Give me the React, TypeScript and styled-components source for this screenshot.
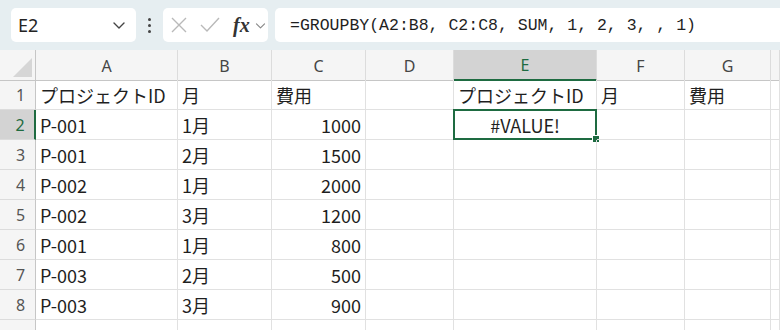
import styled, { createGlobalStyle } from 'styled-components';

const GlobalStyle = createGlobalStyle`
  html, body {
    margin: 0;
    padding: 0;
    background: #ffffff;
    overflow: hidden;
  }
  body {
    font-family: 'Noto Sans CJK JP', 'Noto Sans', sans-serif;
  }
`;

const Page = styled.div`
  width: 780px;
  height: 330px;
  overflow: hidden;
  background: #ffffff;
`;

const Toolbar = styled.div`
  height: 50px;
  box-sizing: border-box;
  background: #e6eef1;
  display: flex;
  align-items: center;
  padding: 0 0 0 11px;
`;

const NameBox = styled.div`
  width: 125px;
  height: 34px;
  box-sizing: border-box;
  background: #ffffff;
  border-radius: 5px;
  display: flex;
  align-items: center;
  justify-content: space-between;
  padding: 0 9px 0 7px;
  font-family: 'Noto Sans', sans-serif;
  font-size: 18px;
  color: #242424;
`;

const Dots = styled.div`
  width: 27px;
  display: flex;
  flex-direction: column;
  align-items: center;
  gap: 3px;
  span {
    width: 3px;
    height: 3px;
    border-radius: 50%;
    background: #444;
  }
`;

const FxBox = styled.div`
  width: 105px;
  height: 34px;
  box-sizing: border-box;
  background: #ffffff;
  border-radius: 5px;
  display: flex;
  align-items: center;
  padding: 0 0 0 6px;
  gap: 10px;
`;

const FxLabel = styled.span`
  font-family: 'Liberation Serif', serif;
  font-style: italic;
  font-weight: bold;
  font-size: 20px;
  color: #333;
  margin-left: 2px;
  margin-right: -6px;
`;

const FormulaInput = styled.div`
  flex: 1;
  height: 34px;
  margin-left: 7px;
  box-sizing: border-box;
  background: #ffffff;
  border-radius: 5px 0 0 5px;
  display: flex;
  align-items: center;
  padding-left: 15px;
  font-family: 'Liberation Mono', monospace;
  font-size: 16.5px;
  color: #1f1f1f;
  white-space: nowrap;
`;

const Sheet = styled.div`
  display: grid;
  grid-template-columns: 36px 142px 94px 94px 88px 143px 88px 86px 1fr;
  grid-auto-rows: 30px;
`;

const ColHeader = styled.div<{ active?: boolean }>`
  box-sizing: border-box;
  height: 31px;
  background: ${(p) => (p.active ? '#d3d3d3' : '#f5f5f5')};
  border-right: 1px solid #dcdcdc;
  border-bottom: ${(p) => (p.active ? '2px solid #1e6b41' : '1px solid #c6c6c6')};
  color: ${(p) => (p.active ? '#1e6b41' : '#454545')};
  display: flex;
  align-items: center;
  justify-content: center;
  font-family: 'Noto Sans', sans-serif;
  font-size: 16px;
  padding-top: 1px;
`;

const Corner = styled.div`
  box-sizing: border-box;
  height: 31px;
  background: #f5f5f5;
  border-right: 1px solid #c6c6c6;
  border-bottom: 1px solid #c6c6c6;
  position: relative;
  &::after {
    content: '';
    position: absolute;
    right: 3px;
    bottom: 3px;
    border-style: solid;
    border-width: 0 0 19px 19px;
    border-color: transparent transparent #d6d6d6 transparent;
  }
`;

const RowHeader = styled.div<{ active?: boolean }>`
  box-sizing: border-box;
  background: ${(p) => (p.active ? '#d3d3d3' : '#f5f5f5')};
  border-right: ${(p) => (p.active ? '2px solid #1e6b41' : '1px solid #c6c6c6')};
  border-bottom: 1px solid #dcdcdc;
  color: ${(p) => (p.active ? '#1e6b41' : '#555555')};
  display: flex;
  align-items: center;
  justify-content: center;
  font-family: 'Noto Sans', sans-serif;
  font-size: 16px;
  padding-left: 6px;
`;

const Cell = styled.div<{ align?: 'left' | 'right' | 'center' }>`
  box-sizing: border-box;
  position: relative;
  border-right: 1px solid #e1e1e1;
  border-bottom: 1px solid #e1e1e1;
  display: flex;
  align-items: center;
  justify-content: ${(p) =>
    p.align === 'right' ? 'flex-end' : p.align === 'center' ? 'center' : 'flex-start'};
  padding: 0 4px;
  font-size: 18px;
  color: #1f1f1f;
  white-space: nowrap;
`;

const Selection = styled.div`
  position: absolute;
  left: -1px;
  top: -1px;
  right: -1px;
  bottom: -1px;
  border: 2px solid #1e6b41;
  pointer-events: none;
  &::after {
    content: '';
    position: absolute;
    right: -5px;
    bottom: -5px;
    width: 6px;
    height: 6px;
    background: #1e6b41;
    border: 1px solid #ffffff;
  }
`;

const columns = ['A', 'B', 'C', 'D', 'E', 'F', 'G', ''];

const rows: string[][] = [
  ['プロジェクトID', '月', '費用', '', 'プロジェクトID', '月', '費用', ''],
  ['P-001', '1月', '1000', '', '#VALUE!', '', '', ''],
  ['P-001', '2月', '1500', '', '', '', '', ''],
  ['P-002', '1月', '2000', '', '', '', '', ''],
  ['P-002', '3月', '1200', '', '', '', '', ''],
  ['P-001', '1月', '800', '', '', '', '', ''],
  ['P-003', '2月', '500', '', '', '', '', ''],
  ['P-003', '3月', '900', '', '', '', '', ''],
];

// the partially visible row under row 8 (its number is off-screen)
const blankRow = ['', '', '', '', '', '', '', ''];

function Chevron({ size = 14, color = '#444' }: { size?: number; color?: string }) {
  return (
    <svg width={size} height={size} viewBox="0 0 16 16">
      <path d="M3 6l5 5 5-5" fill="none" stroke={color} strokeWidth="1.4" strokeLinecap="round" strokeLinejoin="round" />
    </svg>
  );
}

export default function App() {
  return (
    <Page>
      <GlobalStyle />
      <Toolbar>
        <NameBox>
          <span>E2</span>
          <Chevron size={16} />
        </NameBox>
        <Dots>
          <span />
          <span />
          <span />
        </Dots>
        <FxBox>
          <svg width="20" height="20" viewBox="0 0 20 20">
            <path d="M3 3l14 14M17 3L3 17" stroke="#b9b9b9" strokeWidth="1.4" fill="none" />
          </svg>
          <svg width="22" height="20" viewBox="0 0 22 20">
            <path d="M2 10l6 6L20 3" stroke="#b9b9b9" strokeWidth="1.4" fill="none" />
          </svg>
          <FxLabel>fx</FxLabel>
          <Chevron size={13} color="#888" />
        </FxBox>
        <FormulaInput>=GROUPBY(A2:B8, C2:C8, SUM, 1, 2, 3, , 1)</FormulaInput>
      </Toolbar>
      <Sheet>
        <Corner />
        {columns.map((c, i) => (
          <ColHeader key={`c${i}`} active={c === 'E'}>
            {c}
          </ColHeader>
        ))}
        {rows.flatMap((r, ri) => [
          <RowHeader key={`h${ri}`} active={ri === 1}>
            {ri + 1}
          </RowHeader>,
          ...r.map((v, ci) => {
            const isNum = /^\d+$/.test(v);
            const sel = ri === 1 && ci === 4;
            return (
              <Cell key={`${ri}-${ci}`} align={sel ? 'center' : isNum ? 'right' : 'left'}>
                {v}
                {sel && <Selection />}
              </Cell>
            );
          }),
        ])}
        <RowHeader />
        {blankRow.map((_, ci) => (
          <Cell key={`b${ci}`} />
        ))}
      </Sheet>
    </Page>
  );
}
